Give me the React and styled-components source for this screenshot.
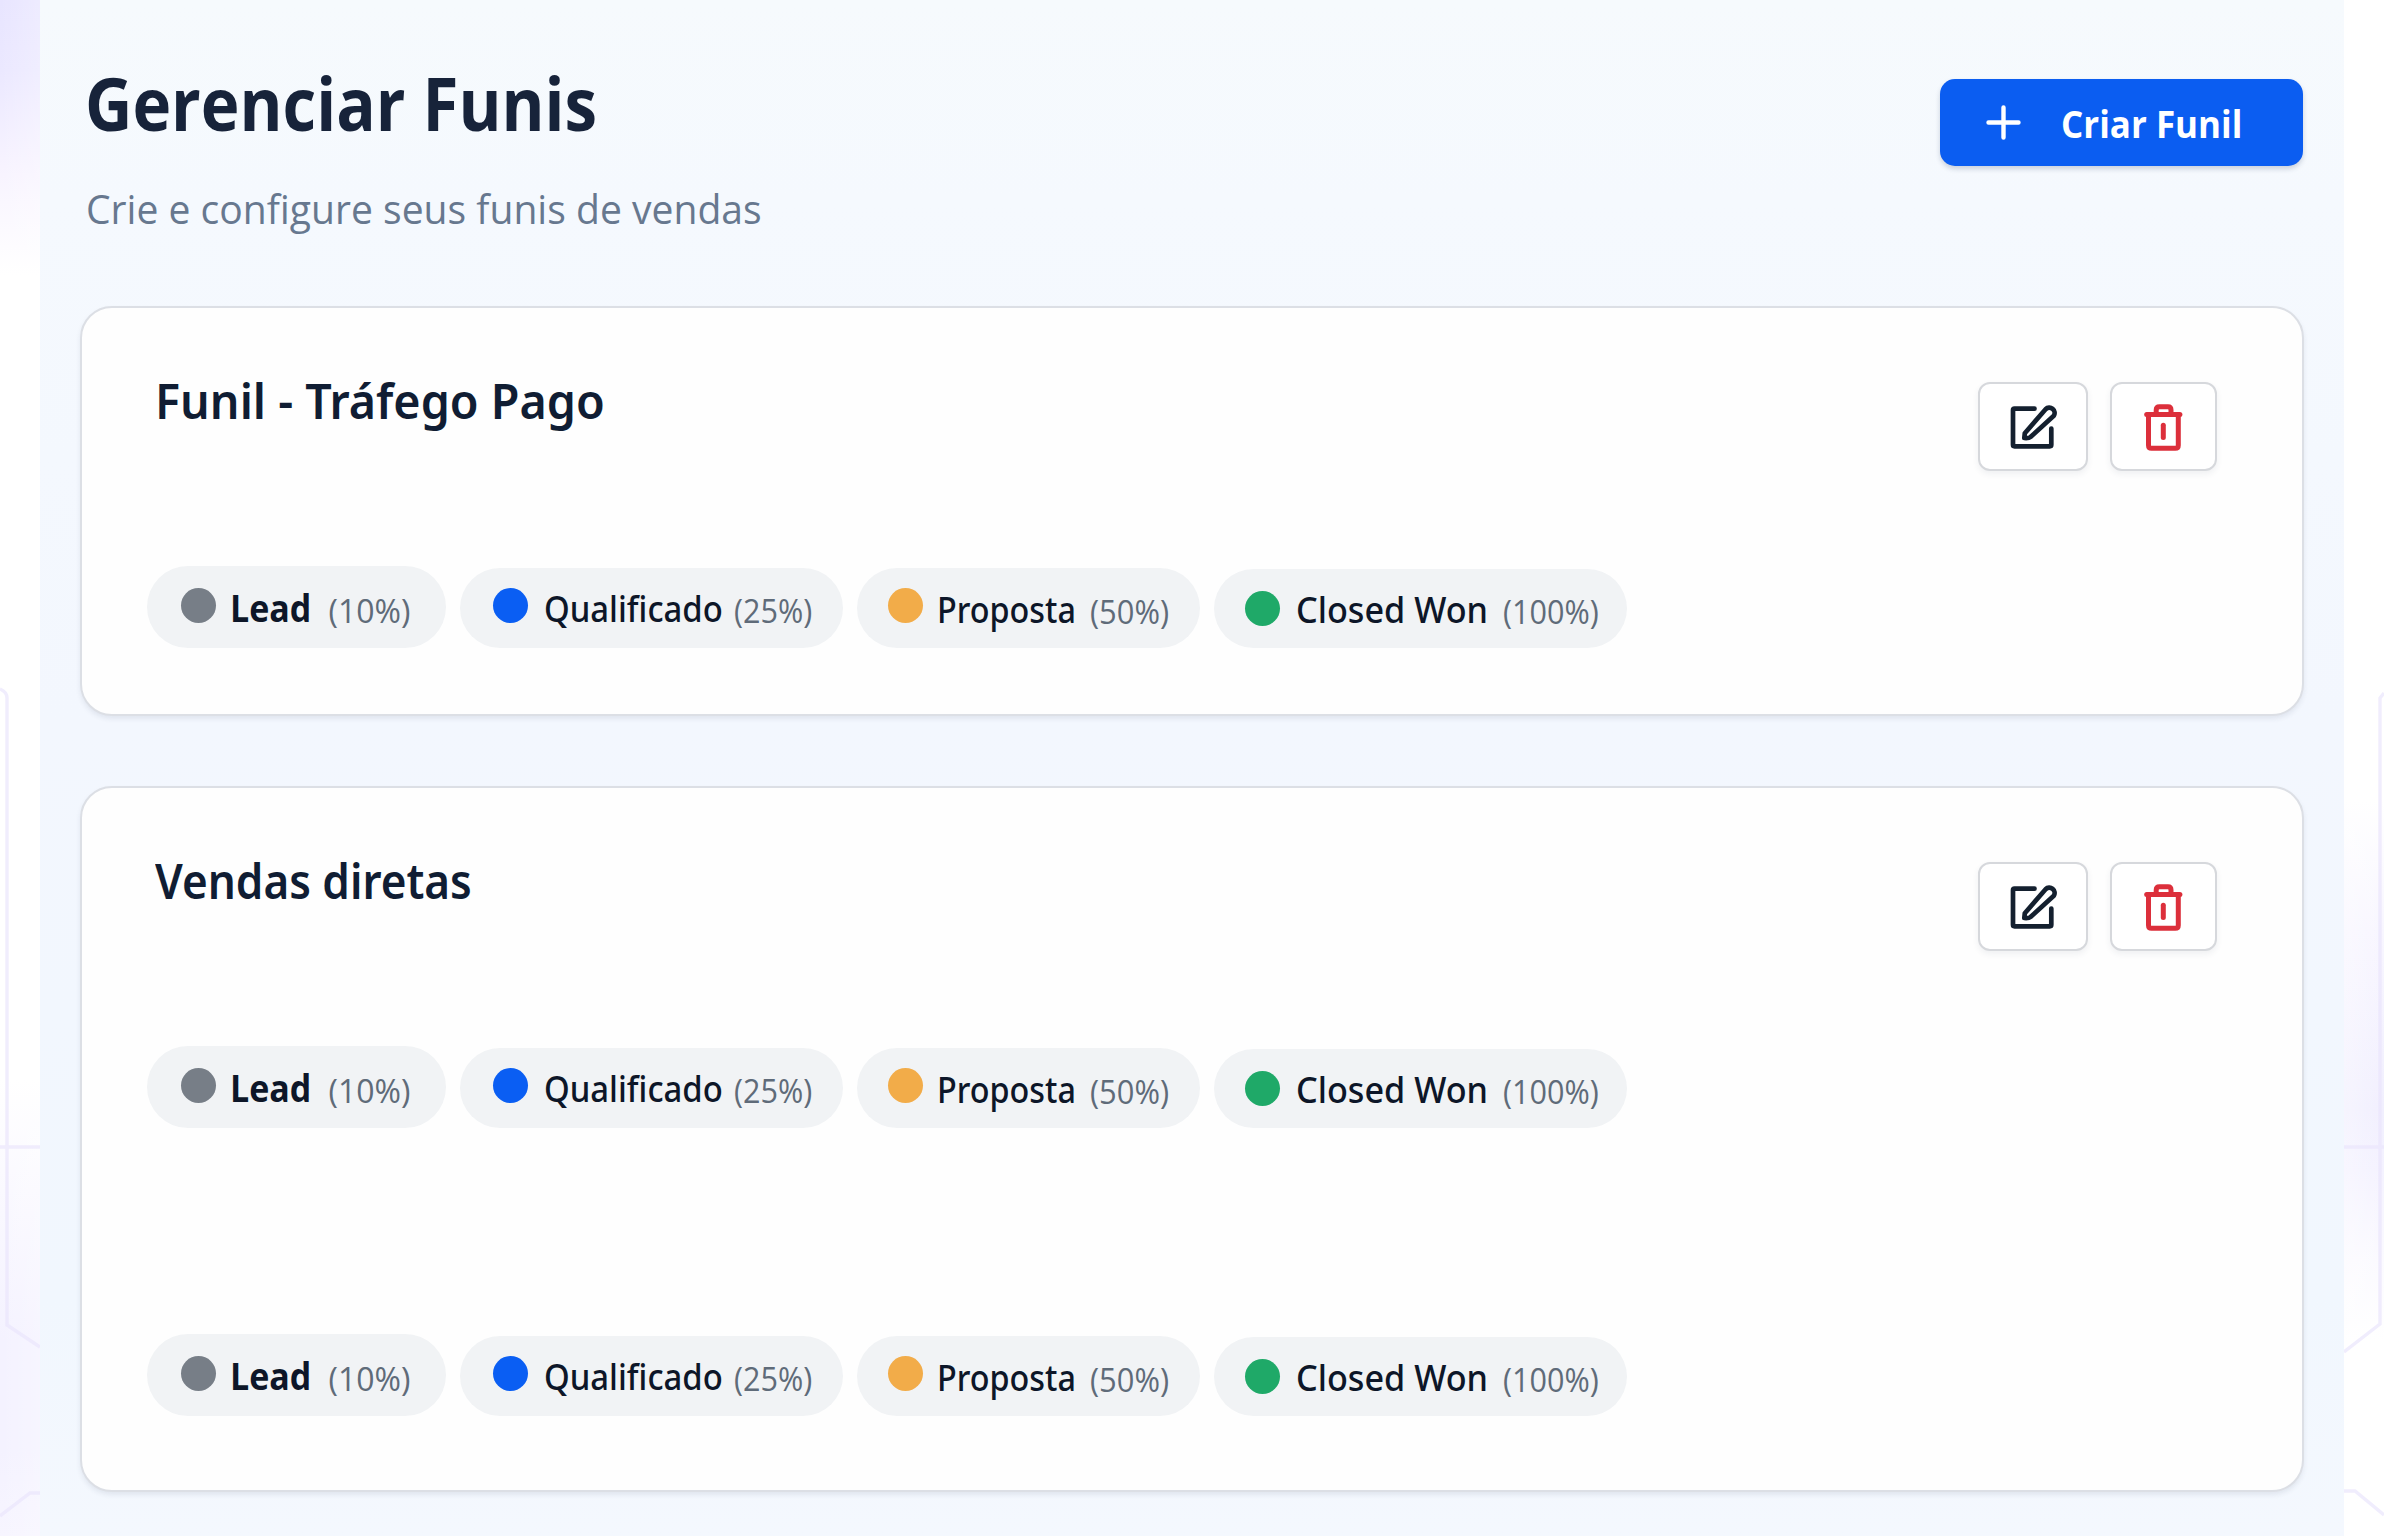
import React from 'react';
import styled, { createGlobalStyle } from 'styled-components';

const GlobalStyle = createGlobalStyle`
  *, *::before, *::after { box-sizing: border-box; }
  body {
    margin: 0;
    background: #fff;
    font-family: 'Open Sans', 'Noto Sans', sans-serif;
    color: #14203a;
  }
`;

const Page = styled.div`
  display: grid;
  grid-template-columns: 40px 1fr 40px;
  height: 1536px;
  overflow: hidden;
`;

const LeftStrip = styled.aside`
  background:
    linear-gradient(to right, rgba(255, 255, 255, 0), rgba(255, 255, 255, 0.25)),
    linear-gradient(to bottom, #e8e5ff 0, #ebe8ff 70px, #f8f4ff 175px, #fff 275px, #fff 1080px, #faf9ff 1190px, #f4f2ff 1340px, #f4f2ff 1450px, #f7f5ff 1536px);
`;

const RightStrip = styled.aside`
  background:
    linear-gradient(to left, rgba(255, 255, 255, 0), rgba(255, 255, 255, 0.35)),
    linear-gradient(to bottom, #fff 800px, #f8f6ff 930px, #f1effe 1110px, #f4f2ff 1170px, #fbfaff 1260px, #fff 1340px);
`;

const Lines = styled.svg`
  display: block;
  width: 40px;
  height: 1536px;
  fill: none;
  stroke: #ebe6fd;
  stroke-width: 3.4;
  opacity: 0.7;
`;

const Panel = styled.main`
  padding: 62px 40px 0;
  background: linear-gradient(to bottom, #f6fafd 0, #f5f9fe 200px, #f3f7fe 720px, #f1f7fe 1300px, #f4f8fe 1536px);
`;

const Header = styled.header`
  display: flex;
  justify-content: space-between;
  align-items: flex-start;
  height: 244px;
  padding-right: 1px;
`;

const Heading = styled.div`
  display: flex;
  flex-direction: column;
  gap: 40px;
  width: 700px;
  padding-left: 5px;
`;

const Title = styled.h1`
  margin: 0;
  font-size: 73px;
  font-weight: 700;
  line-height: 81px;
  white-space: nowrap;
  color: #17233a;
  transform: scaleX(0.897);
  transform-origin: left;
`;

const Subtitle = styled.p`
  margin: 0;
  padding-left: 1px;
  font-size: 41px;
  line-height: 50px;
  white-space: nowrap;
  color: #67788f;
  transform: scaleX(0.953);
  transform-origin: left;
`;

const CreateButton = styled.button`
  display: flex;
  align-items: center;
  gap: 40px;
  width: 363px;
  height: 87px;
  margin-top: 17px;
  padding: 0 0 0 46px;
  border: 0;
  border-radius: 15px;
  background: #0b5df1;
  box-shadow: 0 3px 5px rgba(30, 50, 90, 0.2);
  color: #fff;
  font-family: inherit;
`;

const CreateLabel = styled.span`
  font-size: 38px;
  font-weight: 700;
  line-height: 50px;
  white-space: nowrap;
  transform: scaleX(0.92);
  transform-origin: left;
`;

const Funnels = styled.section`
  display: flex;
  flex-direction: column;
  gap: 70px;
`;

const Card = styled.article`
  height: ${(p) => p.$height}px;
  padding: 62px 85px 0 65px;
  border: 2px solid #dcdfe5;
  border-radius: 32px;
  background: #fefefe;
  box-shadow: 0 3px 5px rgba(40, 60, 90, 0.09);
`;

const CardHead = styled.div`
  display: flex;
  justify-content: space-between;
  height: 196px;
  padding-left: 8px;
`;

const CardTitle = styled.h2`
  margin: 0;
  padding-top: 1px;
  font-family: 'Noto Sans', 'Open Sans', sans-serif;
  font-size: 48px;
  font-weight: 600;
  line-height: 60px;
  white-space: nowrap;
  color: #101d33;
  transform: scaleX(${(p) => p.$scale});
  transform-origin: left;
`;

const Actions = styled.div`
  display: flex;
  gap: 22px;
  padding-top: 12px;
`;

const IconButton = styled.button`
  display: flex;
  align-items: center;
  justify-content: center;
  width: ${(p) => p.$width}px;
  height: 89px;
  padding: 0;
  border: 2px solid #d6d8dc;
  border-radius: 12px;
  background: #fff;
  box-shadow: 0 3px 6px rgba(40, 60, 90, 0.07);
  color: ${(p) => p.$color};
`;

const Icon = styled.svg`
  flex: none;
  fill: none;
  stroke: currentColor;
  stroke-linecap: round;
  stroke-linejoin: round;
`;

const StageRows = styled.div`
  display: flex;
  flex-direction: column;
  gap: 206px;
`;

const StageRow = styled.div`
  display: flex;
  align-items: flex-end;
  gap: 14px;
  height: 82px;
`;

const Pill = styled.div`
  display: flex;
  align-items: center;
  width: ${(p) => p.$width}px;
  height: ${(p) => p.$height}px;
  padding-left: ${(p) => p.$pad}px;
  border-radius: 42px;
  background: #f1f3f5;
`;

const Dot = styled.span`
  flex: none;
  width: 35px;
  height: 35px;
  margin: 0 ${(p) => p.$gap}px ${(p) => p.$lift}px 0;
  border-radius: 50%;
  background: ${(p) => p.$color};
`;

const StageText = styled.span`
  display: flex;
  align-items: baseline;
  padding-top: ${(p) => p.$drop}px;
  line-height: 50px;
  white-space: nowrap;
`;

const StageName = styled.span`
  width: ${(p) => p.$width}px;
  font-family: ${(p) => (p.$strong ? "'Open Sans'" : "'Noto Sans'")}, sans-serif;
  font-size: ${(p) => (p.$strong ? 38 : 36)}px;
  font-weight: ${(p) => (p.$strong ? 700 : 500)};
  color: #0d1628;
  transform: scaleX(${(p) => p.$scale});
  transform-origin: left;
`;

const StageChance = styled.span`
  font-size: 32px;
  color: #5f6b79;
  transform: translateY(1px) scaleX(${(p) => p.$scale});
  transform-origin: left;
`;

const stages = [
  { name: 'Lead', chance: '(10%)', color: '#777e87', strong: true, width: 299, height: 82, pad: 34, gap: 14, lift: 3, drop: 2, nameWidth: 98.5, scale: 0.895, chanceScale: 1.0 },
  { name: 'Qualificado', chance: '(25%)', color: '#0a5ef3', width: 383, height: 80, pad: 33, gap: 15.5, lift: 6, drop: 3, nameWidth: 190, scale: 0.912, chanceScale: 0.955 },
  { name: 'Proposta', chance: '(50%)', color: '#f2ac49', width: 343, height: 80, pad: 31, gap: 13.5, lift: 5, drop: 4, nameWidth: 153, scale: 0.898, chanceScale: 0.965 },
  { name: 'Closed Won', chance: '(100%)', color: '#1fa968', width: 413, height: 79, pad: 31, gap: 15.5, lift: 1, drop: 3, nameWidth: 207, scale: 0.95, chanceScale: 0.955 },
];

const funnels = [
  { name: 'Funil - Tráfego Pago', rows: 1, height: 410, scale: 0.972 },
  { name: 'Vendas diretas', rows: 2, height: 706, scale: 0.918 },
];

function PlusIcon() {
  return (
    <Icon width="35" height="35" viewBox="0 0 35 35" strokeWidth="4.4">
      <path d="M17.5 2.5V32.5M2.5 17.5H32.5" />
    </Icon>
  );
}

function EditIcon() {
  return (
    <Icon width="50" height="48" viewBox="0 0 50 48" strokeWidth="4.7">
      <path d="M26.5 5.7H6.5Q5 5.7 5 7.2V41.8Q5 43.3 6.5 43.3H41.8Q43.3 43.3 43.3 41.8V25.5" />
      <path d="M16.3 35L16.8 30.2L37.6 6.2A5.3 5.3 0 0 1 45.8 12.8L22.5 34Q20.8 35.4 16.3 35Z" />
    </Icon>
  );
}

function TrashIcon() {
  return (
    <Icon width="49" height="49" viewBox="0 0 49 49" strokeWidth="5">
      <path d="M7.7 12.4H40.9" />
      <path d="M17.2 12V8Q17.2 4.7 20.5 4.7H29Q32 4.7 32 8V12" />
      <path d="M9.5 13V43.3Q9.5 46.3 12.5 46.3H36.3Q39.3 46.3 39.3 43.3V13" />
      <path d="M24.3 23.2V35.6" />
    </Icon>
  );
}

function Stages() {
  return (
    <StageRow>
      {stages.map((s) => (
        <Pill key={s.name} $width={s.width} $height={s.height} $pad={s.pad}>
          <Dot $color={s.color} $gap={s.gap} $lift={s.lift} />
          <StageText $drop={s.drop}>
            <StageName $strong={s.strong} $width={s.nameWidth} $scale={s.scale}>{s.name}</StageName>
            <StageChance $scale={s.chanceScale}>{s.chance}</StageChance>
          </StageText>
        </Pill>
      ))}
    </StageRow>
  );
}

export default function App() {
  return (
    <>
      <GlobalStyle />
      <Page>
        <LeftStrip>
          <Lines viewBox="0 0 40 1536">
            <path d="M0 689Q7 692 7 698V1325L40 1347M0 1147H40M0 1516L30 1493H40" />
          </Lines>
        </LeftStrip>
        <Panel>
          <Header>
            <Heading>
              <Title>Gerenciar Funis</Title>
              <Subtitle>Crie e configure seus funis de vendas</Subtitle>
            </Heading>
            <CreateButton>
              <PlusIcon />
              <CreateLabel>Criar Funil</CreateLabel>
            </CreateButton>
          </Header>
          <Funnels>
            {funnels.map((f) => (
              <Card key={f.name} $height={f.height}>
                <CardHead>
                  <CardTitle $scale={f.scale}>{f.name}</CardTitle>
                  <Actions>
                    <IconButton $width={110} $color="#14202f" aria-label="Editar"><EditIcon /></IconButton>
                    <IconButton $width={107} $color="#dc2f3b" aria-label="Excluir"><TrashIcon /></IconButton>
                  </Actions>
                </CardHead>
                <StageRows>
                  {Array.from({ length: f.rows }, (_, i) => <Stages key={i} />)}
                </StageRows>
              </Card>
            ))}
          </Funnels>
        </Panel>
        <RightStrip>
          <Lines viewBox="0 0 40 1536">
            <path d="M40 693L36 698V1324L0 1352M0 1147H40M0 1491H11L40 1515" />
          </Lines>
        </RightStrip>
      </Page>
    </>
  );
}
